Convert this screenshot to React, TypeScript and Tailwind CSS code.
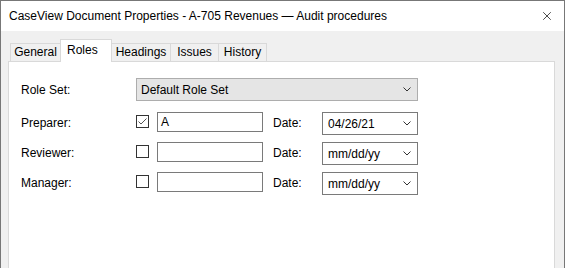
import { X } from 'lucide-react';

const font = { fontFamily: '"Segoe UI", "Liberation Sans", Arial, sans-serif' };

function Chevron() {
  return (
    <svg width="8" height="5" viewBox="0 0 8 5" className="shrink-0">
      <polyline points="0.5,0.5 4,4 7.5,0.5" fill="none" stroke="#333" strokeWidth="1" />
    </svg>
  );
}

function Checkbox({ checked }: { checked?: boolean }) {
  return (
    <div className="mt-[3px] flex h-[13px] w-[13px] shrink-0 items-center justify-center border border-[#333] bg-white">
      {checked && (
        <svg width="11" height="11" viewBox="0 0 11 11">
          <polyline points="1.5,5.5 4,8 9.5,2.5" fill="none" stroke="#555" strokeWidth="1" />
        </svg>
      )}
    </div>
  );
}

function RoleRow({ label, checked, name, date }: { label: string; checked?: boolean; name: string; date: string }) {
  return (
    <div className="flex h-[23px] items-start">
      <div className="w-[115px] leading-[23px]">{label}</div>
      <Checkbox checked={checked} />
      <div className="ml-[8px] h-[20px] w-[106px] border border-[#7a7a7a] bg-white pl-[3px] leading-[18px]">{name}</div>
      <div className="ml-[10px] w-[49px] leading-[23px]">Date:</div>
      <div className="flex h-[23px] w-[96px] items-center justify-between border border-[#7a7a7a] bg-white pl-[5px] pr-[6px]">
        <span>{date}</span>
        <Chevron />
      </div>
    </div>
  );
}

const tabs = [
  { name: 'General', w: 'w-[50px]' },
  { name: 'Roles', w: 'w-[52px]', active: true },
  { name: 'Headings', w: 'w-[59px]' },
  { name: 'Issues', w: 'w-[48px]' },
  { name: 'History', w: 'w-[48px]' },
];

export default function App() {
  return (
    <div
      className="flex h-[268px] w-[565px] flex-col overflow-hidden border border-b-0 border-[#777] bg-[#f0f0f0] text-[12px] text-black"
      style={font}
    >
      {/* Title bar */}
      <div className="flex h-[30px] shrink-0 items-center justify-between bg-white pl-[8px] pr-[8px]">
        <span>CaseView Document Properties - A-705 Revenues — Audit procedures</span>
        <X size={14} strokeWidth={1.2} className="mr-[2px] text-black" />
      </div>

      <div className="flex flex-1 flex-col pl-[7px] pt-[8px]">
        {/* Tabs */}
        <div className="relative z-10 flex h-[22px] items-end pl-[2px]">
          {tabs.map((t, i) =>
            t.active ? (
              <div
                key={t.name}
                className={`${t.w} -mb-px h-[23px] border border-b-0 border-[#d9d9d9] bg-white pl-[6px] pt-[1px]`}
              >
                {t.name}
              </div>
            ) : (
              <div
                key={t.name}
                className={`${t.w} h-[18px] border-t border-[#d9d9d9] bg-[#f0f0f0] text-center leading-[17px] ${
                  i === 0 ? 'border-l' : ''
                } ${i === tabs.length - 1 ? 'border-r' : ''} ${i > 1 ? 'border-r' : ''}`}
              >
                {t.name}
              </div>
            ),
          )}
        </div>

        {/* Panel */}
        <div className="flex w-[547px] flex-1 flex-col border border-b-0 border-[#d9d9d9] bg-white pl-[12px] pt-[16px]">
          <div className="flex h-[23px] items-center">
            <div className="w-[115px]">Role Set:</div>
            <div className="flex h-[23px] w-[282px] items-center justify-between border border-[#adadad] bg-[#e5e5e5] pl-[4px] pr-[6px]">
              <span>Default Role Set</span>
              <Chevron />
            </div>
          </div>
          <div className="mt-[11px] flex flex-col gap-[7px]">
            <RoleRow label="Preparer:" checked name="A" date="04/26/21" />
            <RoleRow label="Reviewer:" name="" date="mm/dd/yy" />
            <RoleRow label="Manager:" name="" date="mm/dd/yy" />
          </div>
        </div>
      </div>
    </div>
  );
}
